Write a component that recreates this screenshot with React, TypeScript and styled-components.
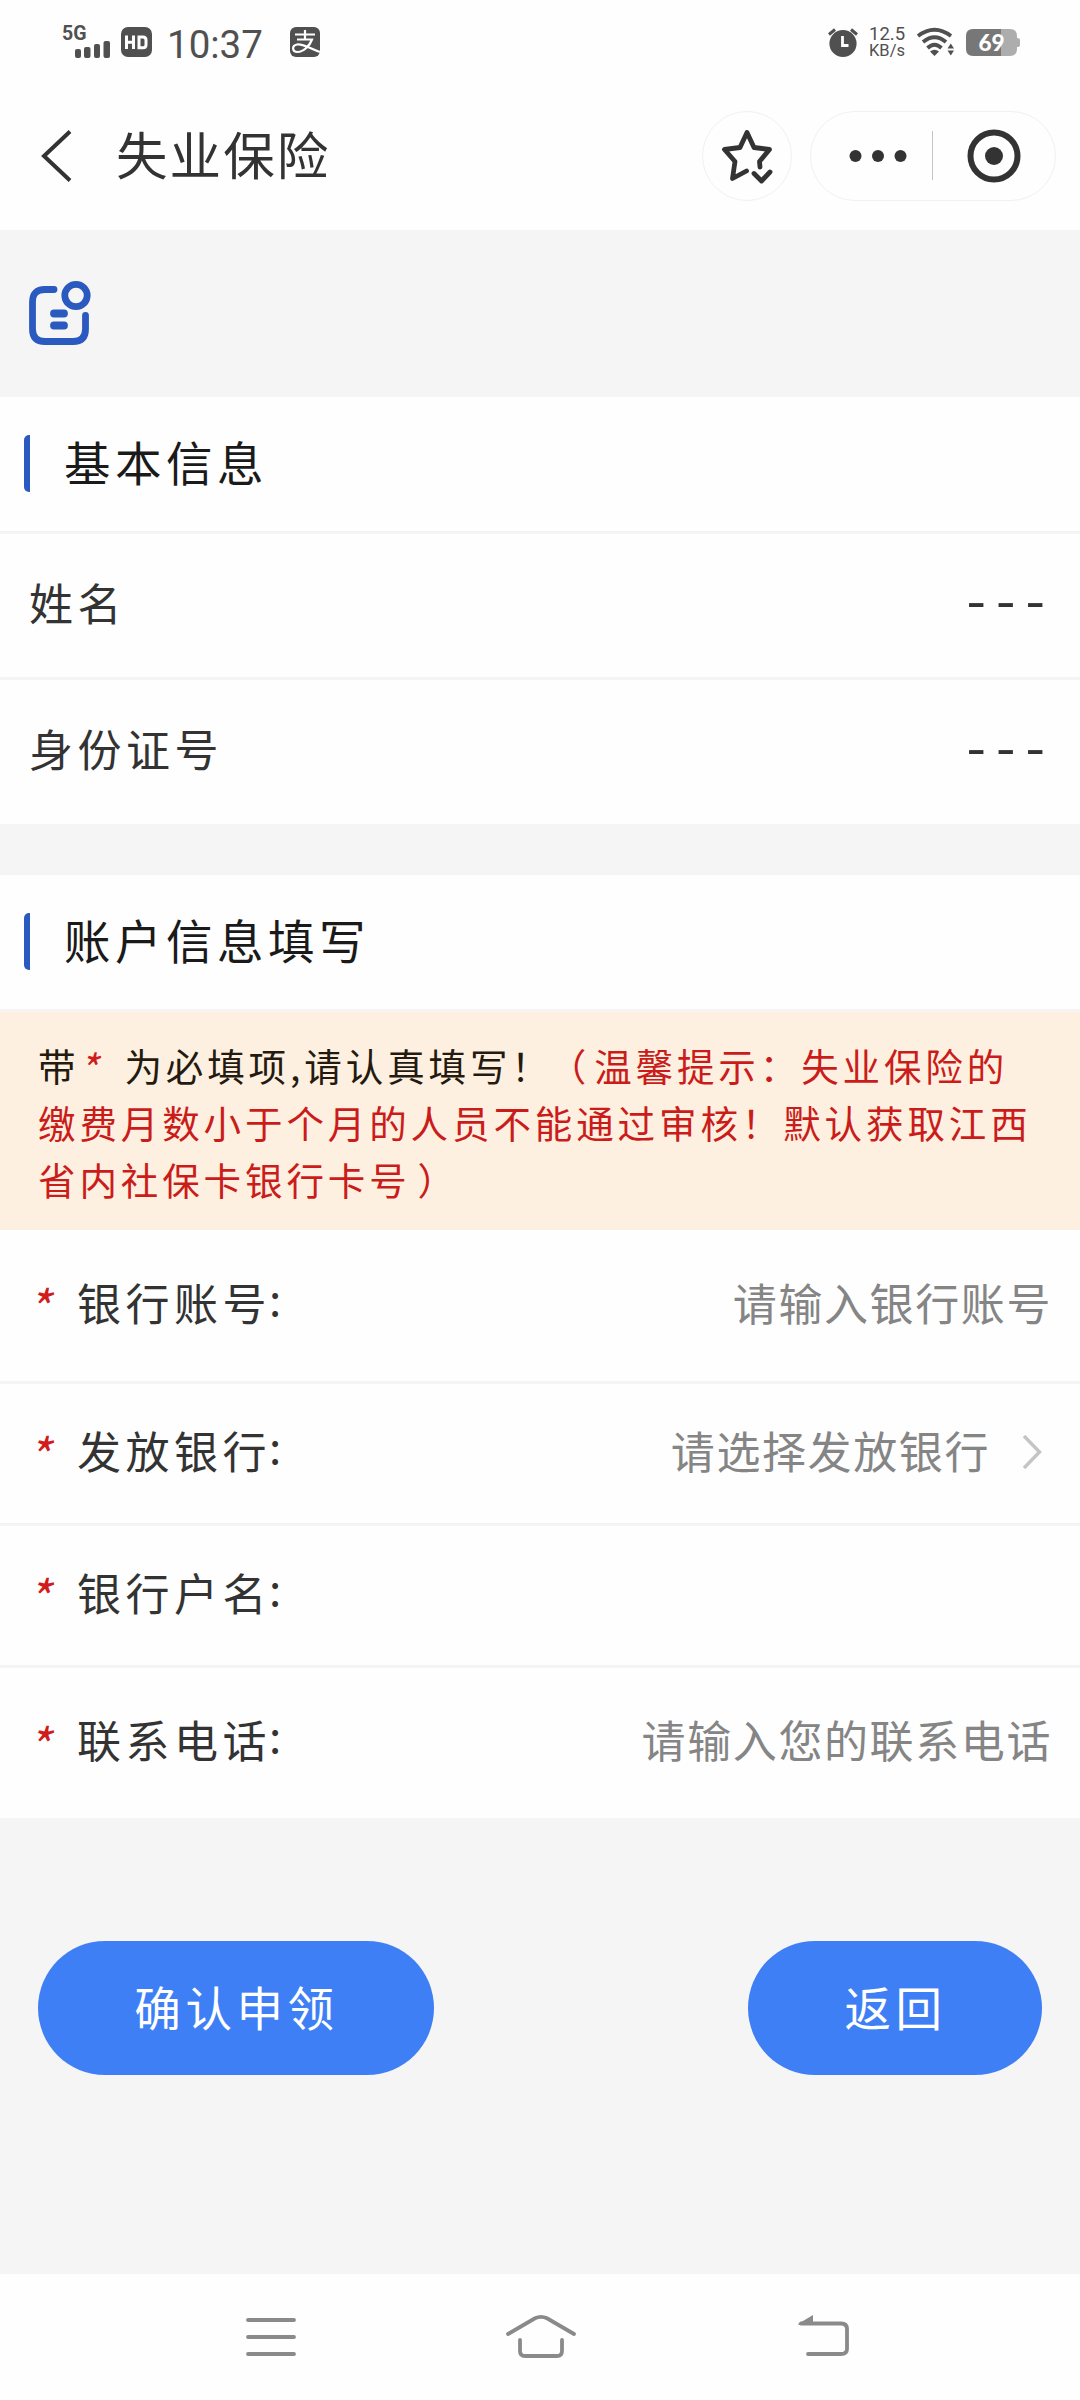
import React from "react";
import styled, { createGlobalStyle, css } from "styled-components";

const GlobalStyle = createGlobalStyle`
  * { box-sizing: border-box; }
  body { margin: 0; background: #f5f5f5; }
`;

const LINE = "#f4f4f4";
const BLUE = "#2a5abf";

const Screen = styled.div`
  width: 1080px;
  height: 2400px;
  display: flex;
  flex-direction: column;
  background: #f5f5f5;
  color: #333;
  font-family: "Noto Sans CJK SC", sans-serif;
  overflow: hidden;
`;

const Svg = styled.svg<{ $m?: string }>`
  display: block;
  flex: none;
  margin: ${(p) => p.$m ?? "0"};
  overflow: visible;
`;

/* ---- status bar ---- */
const StatusBar = styled.div`
  flex: none;
  height: 81px;
  padding: 3px 60px 0 63px;
  display: flex;
  align-items: center;
  justify-content: space-between;
  background: #fefefe;
  color: #505050;
  font-family: Roboto, sans-serif;
`;
const StatusGroup = styled.div`
  display: flex;
  align-items: center;
`;
const Clock = styled.span`
  margin: 6px 28px 0 15px;
  width: 95px;
  font-size: 38.5px;
  line-height: 40px;
  white-space: nowrap;
`;
const Speed = styled.div`
  margin: 0 12px 0 11px;
  width: 36px;
  display: flex;
  flex-direction: column;
  gap: 1px;
  font-size: 18.5px;
  line-height: 15px;
  white-space: nowrap;
`;
const SpeedUnit = styled.span`
  font-size: 16.5px;
  line-height: 15px;
`;

/* ---- title bar ---- */
const TitleBar = styled.header`
  flex: none;
  height: 149px;
  padding: 0 24px 0 41px;
  display: flex;
  align-items: center;
  background: #fefefe;
`;
const PageTitle = styled.h1`
  flex: 1;
  margin: -6px 0 0 44px;
  font-size: 51.5px;
  font-weight: 400;
  letter-spacing: 2.1px;
  line-height: 60px;
`;
const RoundButton = styled.div`
  width: 90px;
  height: 90px;
  margin-right: 18px;
  border: 1.5px solid #f1f1f1;
  border-radius: 45px;
  display: flex;
  align-items: center;
  justify-content: center;
`;
const Capsule = styled.div`
  width: 246px;
  height: 90px;
  border: 1.5px solid #f1f1f1;
  border-radius: 45px;
  display: flex;
  align-items: center;
  padding-left: 38px;
`;
const Divider = styled.i`
  width: 1px;
  height: 49px;
  margin: 0 34px 0 25px;
  background: #c4c4c4;
`;

/* ---- content ---- */
const IconStrip = styled.div`
  flex: none;
  height: 167px;
  padding: 51px 0 0 29px;
`;
const Section = styled.section`
  flex: none;
  background: #fefefe;
`;
const Gap = styled.div`
  flex: none;
  height: 51px;
`;
const SectionHead = styled.div`
  height: 137px;
  padding: 0 0 1px 24px;
  display: flex;
  align-items: center;
  gap: 34px;
  border-bottom: 3px solid ${LINE};
  &::before {
    content: "";
    width: 6px;
    height: 57px;
    border-radius: 5px 0 0 5px;
    background: ${BLUE};
  }
`;
const SectionTitle = styled.h2`
  margin: -5px 0 0;
  color: #1a1a1a;
  font-size: 46.5px;
  font-weight: 400;
  letter-spacing: 4.5px;
  line-height: 56px;
`;
const rowText = css`
  font-size: 44px;
  line-height: 54px;
  white-space: nowrap;
`;
const Row = styled.div<{ $h: number; $last?: boolean; $form?: boolean }>`
  height: ${(p) => p.$h}px;
  padding: 0 28px 8px ${(p) => (p.$form ? 36 : 29)}px;
  display: flex;
  align-items: center;
  border-bottom: ${(p) => (p.$last ? 0 : 3)}px solid ${LINE};
`;
const Label = styled.span`
  ${rowText}
  flex: 1;
  letter-spacing: 4.5px;
`;
const Colon = styled.span`
  margin-left: -2px;
  vertical-align: 5px;
  line-height: 0;
`;
const Dashes = styled.span`
  margin: -9px -3px 0 0;
  font-size: 56px;
  line-height: 54px;
  letter-spacing: 10.1px;
  white-space: nowrap;
`;
const Star = styled.span`
  width: 41px;
  margin-top: 7px;
  color: #d01c1c;
  font-size: 48px;
  font-style: italic;
  line-height: 54px;
  text-indent: -9px;
`;
const Placeholder = styled.span`
  ${rowText}
  color: #858585;
  letter-spacing: 1.6px;
`;
const Notice = styled.p`
  margin: 0;
  height: 218px;
  padding: 24px 38px 0;
  background: #fef0e0;
  color: #241a10;
  font-size: 37.5px;
  letter-spacing: 3.9px;
  line-height: 57px;
  white-space: nowrap;
`;
const Warn = styled.span`
  color: #ca1c1a;
`;
const Paren = styled.span<{ $shift: number }>`
  margin-left: ${(p) => p.$shift}px;
  margin-right: ${(p) => -p.$shift}px;
`;
const NoticeStar = styled.span`
  display: inline-block;
  width: 45px;
  text-indent: -1px;
  vertical-align: -3px;
  line-height: 40px;
  color: #d01c1c;
  font-size: 40px;
  font-style: italic;
`;

/* ---- actions ---- */
const Actions = styled.div`
  flex: 1;
  padding: 123px 38px 0;
  display: flex;
  justify-content: space-between;
  align-items: flex-start;
`;
const Pill = styled.button<{ $w: number }>`
  width: ${(p) => p.$w}px;
  height: 134px;
  padding: 0 0 6px 1px;
  border: 0;
  border-radius: 67px;
  background: #3f7ff6;
  color: #fff;
  font-family: inherit;
  font-size: 46.5px;
  letter-spacing: 4.6px;
`;
const NavBar = styled.nav`
  flex: none;
  height: 126px;
  padding-left: 246px;
  display: flex;
  align-items: center;
  background: #fefefe;
`;

const FormRow = ({ label, h, last, children }: { label: string; h: number; last?: boolean; children?: React.ReactNode }) => (
  <Row $h={h} $last={last} $form>
    <Star>*</Star>
    <Label>
      {label}
      <Colon>:</Colon>
    </Label>
    {children}
  </Row>
);

export default function App() {
  return (
    <Screen>
      <GlobalStyle />
      <StatusBar>
        <StatusGroup>
          <Svg width="47" height="32" viewBox="0 0 47 32" fill="#505050">
            <text x="-1" y="14" fontSize="19.500" fontWeight="700" fontFamily="Roboto">5G</text>
            <rect x="12" y="23" width="6" height="9" rx="2" />
            <rect x="21" y="21" width="6.5" height="11" rx="2" />
            <rect x="31" y="18" width="6" height="14" rx="2" />
            <rect x="40.5" y="15" width="6.5" height="17" rx="2" />
          </Svg>
          <Svg width="31" height="30" viewBox="0 0 31 30" $m="0 0 0 11px">
            <rect width="31" height="30" rx="7" fill="#505050" />
            <path d="M5.5 8.500v13.500M12.500 8.500v13.500M5.500 15.300h7M18 9.900h4q3 0 3 3v4.800q0 3-3 3H18z" fill="none" stroke="#fff" strokeWidth="3" />
          </Svg>
          <Clock>10:37</Clock>
          <Svg width="30" height="30" viewBox="0 0 30 30">
            <rect width="30" height="30" rx="6" fill="#505050" />
            <path d="M5 7.500h20M15 3v9M7 12.500h15C20 18 14 25 7.500 25C2 25 1.500 18.500 7 17.500C13 16.500 20 21.500 30 25" fill="none" stroke="#fff" strokeWidth="2.200" />
          </Svg>
        </StatusGroup>
        <StatusGroup>
          <Svg width="30" height="29" viewBox="0 0 30 29">
            <circle cx="15" cy="15.500" r="13.600" fill="#505050" />
            <path d="M1 6.500L7 1.500M29 6.500L23 1.500" stroke="#505050" strokeWidth="3" />
            <path d="M14.500 8v9.500h6" fill="none" stroke="#fff" strokeWidth="2.800" />
          </Svg>
          <Speed>
            <span>12.5</span>
            <SpeedUnit>KB/s</SpeedUnit>
          </Speed>
          <Svg width="38" height="28" viewBox="0 0 38 28">
            <g fill="none" stroke="#505050" strokeWidth="3.800">
              <path d="M1 8Q17.500-4.500 34 8" />
              <path d="M6 14Q17.500 4.500 29 14" />
              <path d="M10.500 20Q17.500 13.500 24.500 20" />
            </g>
            <path d="M13 23.500Q17.500 20 22 23.500L17.500 28zM30.500 20.500L33.800 15.500L37 20.500zM30.500 22.500L33.800 27.500L37 22.500z" fill="#505050" />
          </Svg>
          <Svg width="54" height="27" viewBox="0 0 54 27" $m="0 0 0 11px">
            <path d="M7 0H35V27H7Q0 27 0 20V7Q0 0 7 0z" fill="#777" />
            <path d="M35 0H44Q51 0 51 7V9Q54 9 54 11V16Q54 18 51 18V20Q51 27 44 27H35z" fill="#adadad" />
            <text x="12.500" y="21.500" fontSize="22.500" fontWeight="900" fontFamily="Lato" fill="#fff">69</text>
          </Svg>
        </StatusGroup>
      </StatusBar>

      <TitleBar>
        <Svg width="31" height="52" viewBox="0 0 31 52" fill="none" stroke="#333" strokeWidth="4">
          <path d="M29 1.500L3 26L29 50.500" />
        </Svg>
        <PageTitle>失业保险</PageTitle>
        <RoundButton>
          <Svg width="50" height="54" viewBox="0 0 50 54" fill="none" stroke="#333" strokeWidth="4.800" strokeLinejoin="round" strokeLinecap="round">
            <path d="M24.500 42L10.500 49.500L13 32.500L2.500 20.500L18 18.500L25 3.500L32 18.500L47.500 20.500L37.500 32.500L38 38" />
            <path d="M32 44.500L39.500 52L48 43" />
          </Svg>
        </RoundButton>
        <Capsule>
          <Svg width="58" height="12" viewBox="0 0 58 12" fill="#333">
            <circle cx="6.500" cy="6" r="6" />
            <circle cx="29" cy="6" r="6" />
            <circle cx="51.500" cy="6" r="6" />
          </Svg>
          <Divider />
          <Svg width="54" height="54" viewBox="0 0 54 54">
            <circle cx="27" cy="27" r="23.500" fill="none" stroke="#333" strokeWidth="6" />
            <circle cx="27" cy="27" r="9" fill="#333" />
          </Svg>
        </Capsule>
      </TitleBar>

      <IconStrip>
        <Svg width="62" height="64" viewBox="0 0 62 64" fill="none" stroke={BLUE} strokeWidth="6.800" strokeLinecap="round">
          <path d="M25 8.500H16Q3.500 8.500 3.500 21V48Q3.500 60.500 16 60.500H44Q56.500 60.500 56.500 48V34.500" />
          <circle cx="47" cy="14.500" r="11.200" />
          <path d="M25 32.500H35M25 44.500H35" strokeWidth="7.800" />
        </Svg>
      </IconStrip>

      <Section>
        <SectionHead>
          <SectionTitle>基本信息</SectionTitle>
        </SectionHead>
        <Row $h={146}>
          <Label>姓名</Label>
          <Dashes>---</Dashes>
        </Row>
        <Row $h={144} $last>
          <Label>身份证号</Label>
          <Dashes>---</Dashes>
        </Row>
      </Section>

      <Gap />

      <Section>
        <SectionHead>
          <SectionTitle>账户信息填写</SectionTitle>
        </SectionHead>
        <Notice>
          带<NoticeStar>*</NoticeStar>为必填项,请认真填写！
          <Warn>
            <Paren $shift={-4}>（</Paren>温馨提示：失业保险的
            <br />
            缴费月数小于个月的人员不能通过审核！默认获取江西
            <br />
            省内社保卡银行卡号<Paren $shift={7}>）</Paren>
          </Warn>
        </Notice>
        <FormRow label="银行账号" h={154}>
          <Placeholder>请输入银行账号</Placeholder>
        </FormRow>
        <FormRow label="发放银行" h={142}>
          <Placeholder>请选择发放银行</Placeholder>
          <Svg width="18" height="34" viewBox="0 0 18 34" fill="none" stroke="#c4c4c4" strokeWidth="3.400" $m="5px 11px 0 33px">
            <path d="M1 1L16.500 17L1 33" />
          </Svg>
        </FormRow>
        <FormRow label="银行户名" h={142} />
        <FormRow label="联系电话" h={150} last>
          <Placeholder>请输入您的联系电话</Placeholder>
        </FormRow>
      </Section>

      <Actions>
        <Pill $w={396}>确认申领</Pill>
        <Pill $w={294}>返回</Pill>
      </Actions>

      <NavBar>
        <Svg width="50" height="40" viewBox="0 0 50 40" stroke="#8a8a8a" strokeWidth="3.800" strokeLinecap="round">
          <path d="M2 3H48M2 20H48M2 37H48" />
        </Svg>
        <Svg width="70" height="44" viewBox="0 0 70 44" fill="none" stroke="#8a8a8a" strokeWidth="3.800" strokeLinecap="round" $m="0 0 0 210px">
          <path d="M2 19L29 3.300Q35 0.500 41 3.300L68 19" />
          <path d="M14 25V36Q14 41 19 41H51Q56 41 56 36V25" />
        </Svg>
        <Svg width="51" height="42" viewBox="0 0 51 42" fill="none" stroke="#8a8a8a" strokeWidth="3.800" strokeLinecap="round" $m="0 0 0 222px">
          <path d="M3 7.500H43Q49 7.500 49 13V33Q49 38 43 38H10" />
          <path d="M0 8L15 -1V9H1z" fill="#8a8a8a" stroke="none" />
        </Svg>
      </NavBar>
    </Screen>
  );
}
